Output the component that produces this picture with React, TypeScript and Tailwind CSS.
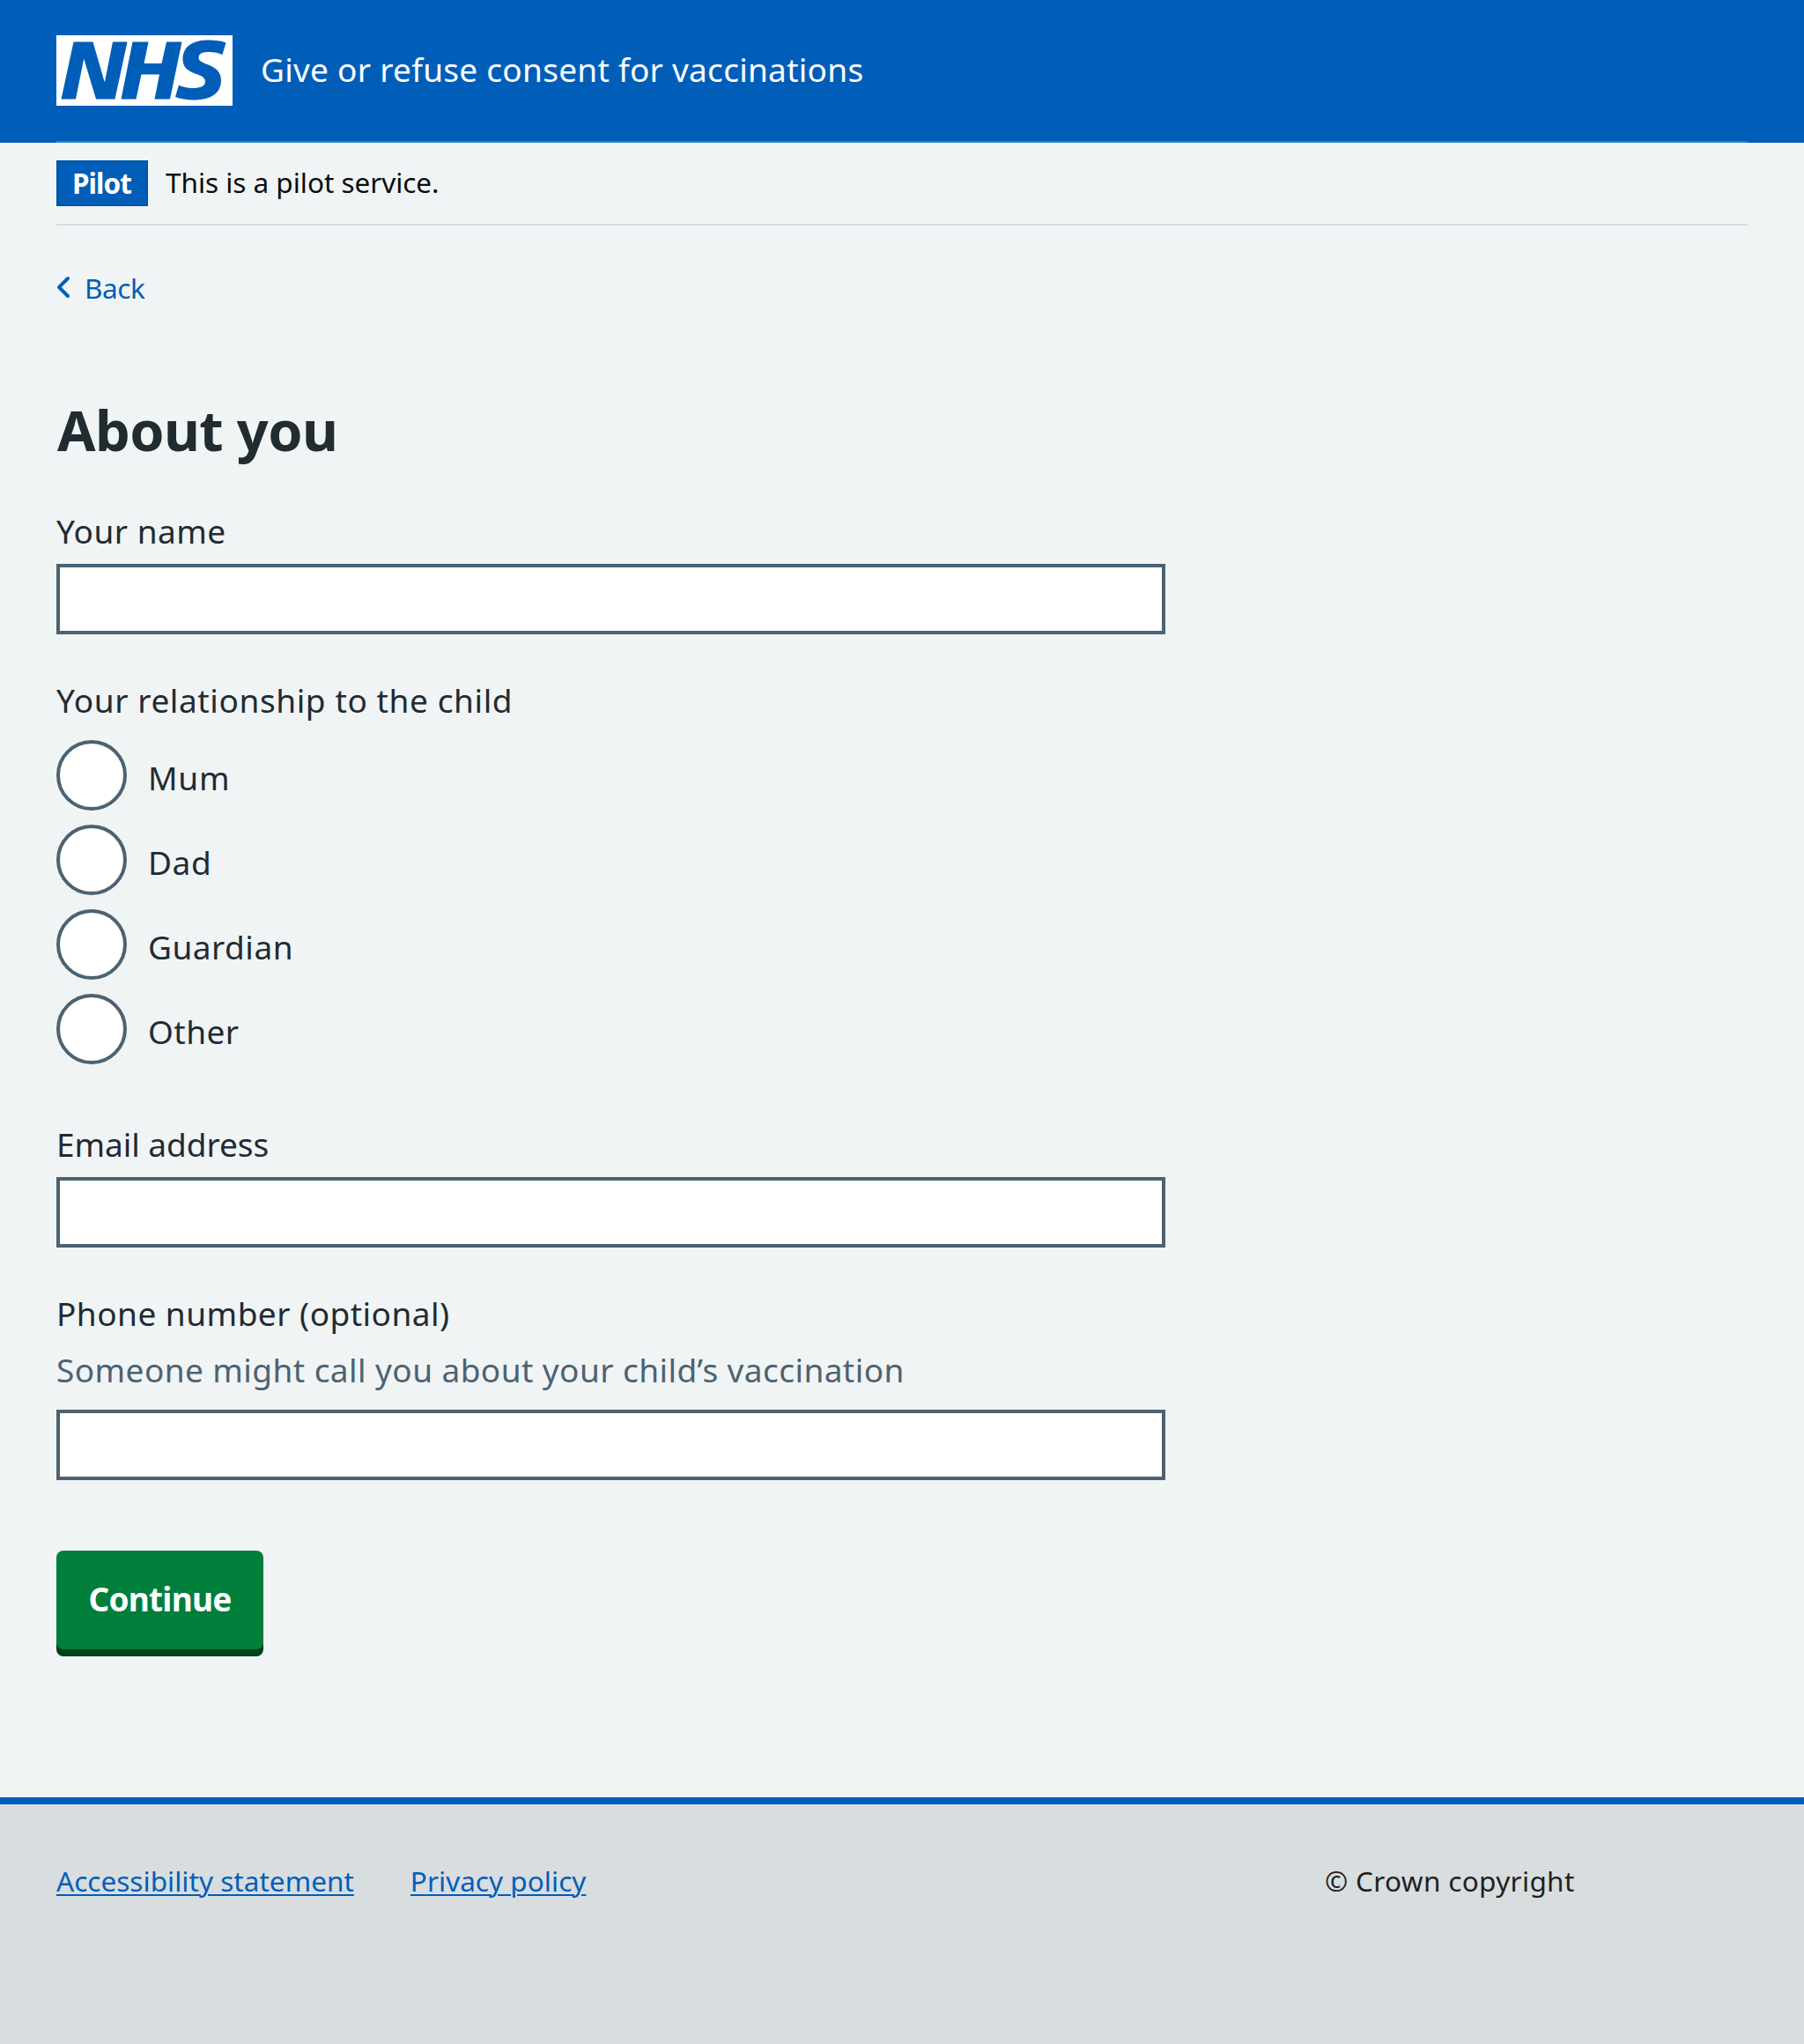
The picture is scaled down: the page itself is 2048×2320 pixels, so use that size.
const inputClass =
  'block h-20 w-[1259px] rounded-none border-4 border-[#4c6272] bg-white px-2 text-[37px] outline-none';
const labelClass = 'block text-[37px] leading-[56px]';

const relationships = [
  { value: 'mum', label: 'Mum', tracking: 'tracking-[0.8px]' },
  { value: 'dad', label: 'Dad', tracking: 'tracking-[0.6px]' },
  { value: 'guardian', label: 'Guardian', tracking: 'tracking-[0.5px]' },
  { value: 'other', label: 'Other', tracking: 'tracking-[0.45px]' },
];

function Logo() {
  return (
    <svg className="h-20 w-[200px] shrink-0" viewBox="0 0 200 80" role="img" aria-label="NHS">
      <path fill="#fff" d="M0 0h200v80H0z" />
      <path
        fill="#005eb8"
        d="M172.5 5.5c-14.5 0-29 5-29 22 0 10.2 7.7 13.5 14.7 16.3l.7.3c5.4 2 10.1 3.9 10.1 8.4 0 6.5-8.5 7.5-14 7.5s-12.5-1.5-16-3.5L135 70c5.5 2 13.5 3.5 20 3.5 15.5 0 32-4.5 32-22.5 0-19.5-25.5-16.5-25.5-25.5 0-5.5 5.5-6.5 12.5-6.5a35 35 0 0 1 14.5 3l4-13.5c-4.5-2-12-3-20-3Zm-131 2h-22l-14 65H22l9-45h.5l13.5 45h21.5l14-65H64l-9 45h-.5l-13-45Zm63 0h-18l-13 65h17l6-28H117l-5.5 28H129l13.5-65H125L119.5 32h-20l5-24.5Z"
      />
    </svg>
  );
}

function Header() {
  return (
    <header className="flex h-[162px] flex-col bg-[#005eb8] px-16">
      <div className="flex h-40 items-center">
        <Logo />
        <span className="ml-8 pb-[3px] text-[37px] leading-[56px] tracking-[0.27px] whitespace-nowrap text-white">
          Give or refuse consent for vaccinations
        </span>
      </div>
      <div className="h-0.5 bg-[#337ec6]" />
    </header>
  );
}

function PhaseBanner() {
  return (
    <div className="mx-16 flex h-[94px] items-center border-b-2 border-[#d8dde0]">
      <strong className="mr-5 flex h-[52px] w-[104px] items-center border-2 border-[#0054a6] bg-[#005eb8] pl-4 text-[31.5px] leading-[48px] font-bold tracking-[-0.94px] text-white">
        Pilot
      </strong>
      <span className="pb-0.5 text-[31.5px] leading-[48px] tracking-[-0.03px] text-[#0b0c0c]">
        This is a pilot service.
      </span>
    </div>
  );
}

export default function App() {
  return (
    <div className="flex h-[2320px] w-[2048px] flex-col overflow-hidden bg-[#f0f4f5] font-['Noto_Sans','Open_Sans',sans-serif] text-[#212b32]">
      <Header />
      <PhaseBanner />

      <main className="flex grow flex-col px-16">
        <a href="#" className="mt-[46px] flex h-12 items-center self-start text-[#005eb8]">
          <svg className="-ml-4 size-12" viewBox="0 0 24 24" fill="currentColor" aria-hidden="true">
            <path d="M8.5 12c0-.3.1-.5.3-.7l5-5c.4-.4 1-.4 1.4 0s.4 1 0 1.4L10.9 12l4.3 4.3c.4.4.4 1 0 1.4s-1 .4-1.4 0l-5-5c-.2-.2-.3-.5-.3-.7z" />
          </svg>
          <span className="pt-px text-[31.5px] leading-[48px] tracking-[-0.42px]">Back</span>
        </a>

        <h1 className="mt-[102px] pl-px text-[63px] leading-[72px] font-bold tracking-[-0.6px]">
          About you
        </h1>

        <form className="flex flex-col items-start">
          <div className="mt-[51px]">
            <label htmlFor="name" className={`${labelClass} tracking-[0.48px]`}>
              Your name
            </label>
            <input id="name" type="text" className={`${inputClass} mt-[9px]`} />
          </div>

          <fieldset className="mt-[47px]">
            <legend className={`${labelClass} tracking-[0.6px]`}>
              Your relationship to the child
            </legend>
            <div className="mt-[17px] flex flex-col gap-4">
              {relationships.map(({ value, label, tracking }) => (
                <label key={value} className="flex h-20 items-center">
                  <input
                    type="radio"
                    name="relationship"
                    value={value}
                    className="size-20 appearance-none rounded-full border-4 border-[#4c6272] bg-white"
                  />
                  <span className={`ml-6 pt-[5px] text-[37px] leading-[56px] ${tracking}`}>
                    {label}
                  </span>
                </label>
              ))}
            </div>
          </fieldset>

          <div className="mt-[63px]">
            <label htmlFor="email" className={`${labelClass} tracking-[-0.05px]`}>
              Email address
            </label>
            <input id="email" type="email" className={`${inputClass} mt-[9px]`} />
          </div>

          <div className="mt-[47px]">
            <label htmlFor="phone" className={`${labelClass} tracking-[0.48px]`}>
              Phone number (optional)
            </label>
            <p className="mt-2 text-[37px] leading-[56px] tracking-[0.43px] text-[#4c6272]">
              Someone might call you about your child’s vaccination
            </p>
            <input id="phone" type="tel" className={`${inputClass} mt-[17px]`} />
          </div>

          <button
            type="button"
            className="mt-20 h-28 w-[235px] rounded-lg bg-[#007f3b] pb-[3px] text-[37px] leading-[56px] font-bold tracking-[-0.8px] text-white shadow-[0_8px_0_#00401e]"
          >
            Continue
          </button>
        </form>
      </main>

      <footer className="flex h-[280px] items-start border-t-8 border-[#005eb8] bg-[#d8dde0] px-16 pt-[63px] text-[31.5px] leading-[48px] whitespace-nowrap">
        <ul className="flex w-[1440px] gap-16 text-[#005eb8]">
          <li>
            <a href="#" className="tracking-[0.03px] underline decoration-2 underline-offset-[3px]">
              Accessibility statement
            </a>
          </li>
          <li>
            <a href="#" className="tracking-[0.03px] underline decoration-2 underline-offset-[3px]">
              Privacy policy
            </a>
          </li>
        </ul>
        <p className="tracking-[0.34px] text-[#231f20]">© Crown copyright</p>
      </footer>
    </div>
  );
}
